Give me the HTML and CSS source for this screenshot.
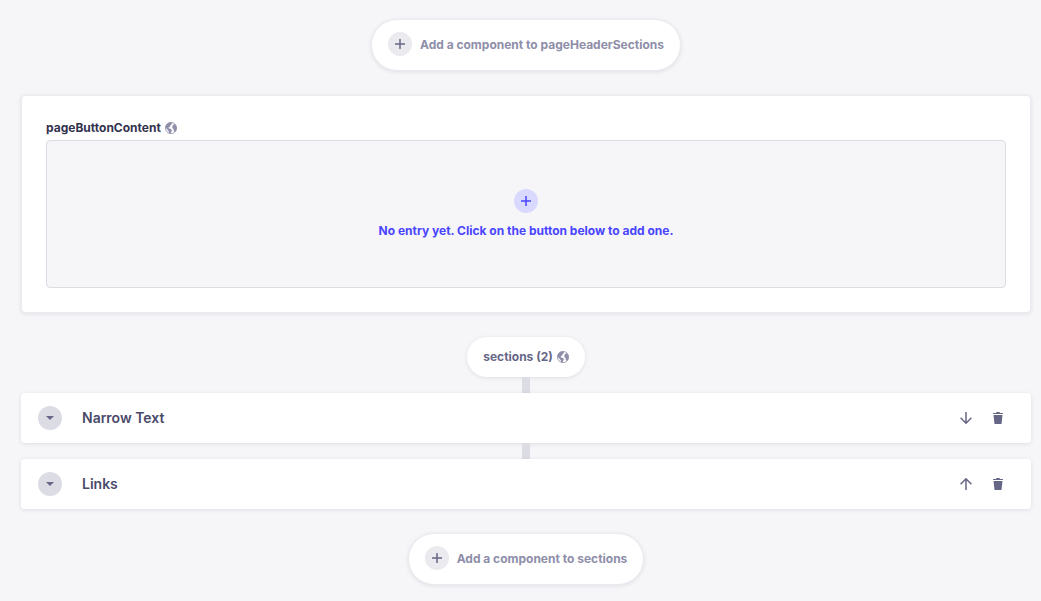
FILE: index.html
```html
<!DOCTYPE html>
<html lang="en">
<head>
<meta charset="utf-8">
<meta name="viewport" content="width=device-width, initial-scale=1">
<title>Page content</title>
<link rel="stylesheet" href="styles.css">
</head>
<body>
<svg class="symbols" aria-hidden="true">
  <symbol id="plus" viewBox="0 0 24 24"><path d="M11.250 7h1.500v4.250H17v1.500h-4.250V17h-1.500v-4.250H7v-1.500h4.250z"/></symbol>
  <symbol id="globe" viewBox="0 0 24 24">
    <circle cx="12" cy="12" r="11.200" fill="none" stroke="currentColor" stroke-width="1.600"/>
    <path d="M3 5 7 1.500 13 1l1 3-3 2.500-1 3-3 1.500 1 2 4 1 2 3-2 3-1 3.500-3-1-.5-4-2.500-3L2 12 1 9zM17 5l3-.5 3 5v6l-3 4.500-2.500-2v-3.500L14.500 12l.5-4z"/>
  </symbol>
  <symbol id="trash" viewBox="0 0 12 12"><path d="M4.500 0h3l.5 1h3v1H1V1h3zM1.500 3h9l-1 9h-7z"/></symbol>
  <symbol id="down" viewBox="0 0 12 12"><path d="M6 0v11M.6 5.800 6 11.200l5.400-5.400" fill="none" stroke="currentColor" stroke-width="1.500"/></symbol>
  <symbol id="up" viewBox="0 0 12 12"><path d="M6 12V1M.6 6.200 6 .8l5.400 5.400" fill="none" stroke="currentColor" stroke-width="1.500"/></symbol>
  <symbol id="caret" viewBox="0 0 8 4"><path d="M0 0h8L4 4z"/></symbol>
</svg>
<main class="page">
  <button class="add" type="button">
    <svg class="plus"><use href="#plus"/></svg>
    <span>Add a component to pageHeaderSections</span>
  </button>

  <section class="card">
    <h2 class="label">pageButtonContent <svg class="icon globe"><use href="#globe"/></svg></h2>
    <button class="empty" type="button">
      <svg class="plus plus-primary"><use href="#plus"/></svg>
      <span>No entry yet. Click on the button below to add one.</span>
    </button>
  </section>

  <section class="zone">
    <h2 class="zone-title">sections (2) <svg class="icon globe"><use href="#globe"/></svg></h2>
    <ul class="components">
      <li class="component">
        <div class="row">
          <button class="toggle" type="button" aria-label="Expand Narrow Text"><svg class="caret"><use href="#caret"/></svg></button>
          <h3 class="name">Narrow Text</h3>
          <button class="action" type="button" aria-label="Move down"><svg class="icon"><use href="#down"/></svg></button>
          <button class="action" type="button" aria-label="Delete Narrow Text"><svg class="icon"><use href="#trash"/></svg></button>
        </div>
      </li>
      <li class="component">
        <div class="row">
          <button class="toggle" type="button" aria-label="Expand Links"><svg class="caret"><use href="#caret"/></svg></button>
          <h3 class="name">Links</h3>
          <button class="action" type="button" aria-label="Move up"><svg class="icon"><use href="#up"/></svg></button>
          <button class="action" type="button" aria-label="Delete Links"><svg class="icon"><use href="#trash"/></svg></button>
        </div>
      </li>
    </ul>
  </section>

  <button class="add" type="button">
    <svg class="plus"><use href="#plus"/></svg>
    <span>Add a component to sections</span>
  </button>
</main>
</body>
</html>
```
FILE: styles.css
```css
* { box-sizing: border-box; }

body {
  margin: 0;
  background: #f6f6f9;
  color: #32324d;
  font: 700 12px/16px Inter, "Liberation Sans", sans-serif;
}

h2, h3, ul { margin: 0; padding: 0; font: inherit; }
button { border: 0; padding: 0; background: none; color: inherit; font: inherit; cursor: pointer; }
svg { display: block; flex: none; fill: currentColor; }

.symbols { position: absolute; width: 0; height: 0; }

.page {
  display: flex;
  flex-direction: column;
  align-items: center;
  gap: 24px;
  padding: 19px 10px 16px 21px;
}

.add {
  display: flex;
  align-items: flex-start;
  gap: 8px;
  padding: 12px 16px 14px;
  border: 1px solid #eaeaef;
  border-radius: 26px;
  background: #fff;
  color: #8e8ea9;
  box-shadow: 0 1px 4px rgba(33, 33, 52, 0.1);
}
.add span { padding-top: 5px; }

.plus {
  width: 24px;
  height: 24px;
  border-radius: 50%;
  background: #eaeaef;
  color: #666687;
}
.plus-primary { background: #d9d8ff; color: #4945ff; }

.card {
  align-self: stretch;
  padding: 24px;
  border: 1px solid #eaeaef;
  border-radius: 4px;
  background: #fff;
  box-shadow: 0 1px 4px rgba(33, 33, 52, 0.1);
}

.label { display: flex; align-items: center; gap: 4px; margin-bottom: 4px; }
.icon { width: 12px; height: 12px; }
.globe { color: #8e8ea9; }

.empty {
  display: flex;
  flex-direction: column;
  align-items: center;
  gap: 10px;
  width: 100%;
  padding: 48px 24px;
  border: 1px solid #dcdce4;
  border-radius: 4px;
  background: #f6f6f9;
  color: #4945ff;
}

.zone { display: flex; flex-direction: column; align-items: center; align-self: stretch; }
.zone-title {
  display: flex;
  align-items: center;
  gap: 4px;
  padding: 12px 16px;
  border-radius: 20px;
  background: #fff;
  color: #666687;
  box-shadow: 0 1px 4px rgba(33, 33, 52, 0.1);
}

.components { align-self: stretch; list-style: none; }
.component::before {
  content: "";
  display: block;
  width: 8px;
  height: 16px;
  margin: 0 auto;
  background: #dcdce4;
}
.row {
  display: flex;
  align-items: center;
  padding: 13px 17px;
  border-radius: 4px;
  background: #fff;
  box-shadow: 0 1px 4px rgba(33, 33, 52, 0.1);
}
.toggle {
  display: grid;
  place-items: center;
  width: 24px;
  height: 24px;
  border-radius: 50%;
  background: #dcdce4;
  color: #666687;
}
.caret { width: 8px; height: 4px; }
.name { flex: 1; margin-left: 20px; color: #4a4a6a; font-size: 14px; font-weight: 600; line-height: 20px; }
.action { display: grid; place-items: center; width: 32px; height: 24px; color: #666687; }
```
